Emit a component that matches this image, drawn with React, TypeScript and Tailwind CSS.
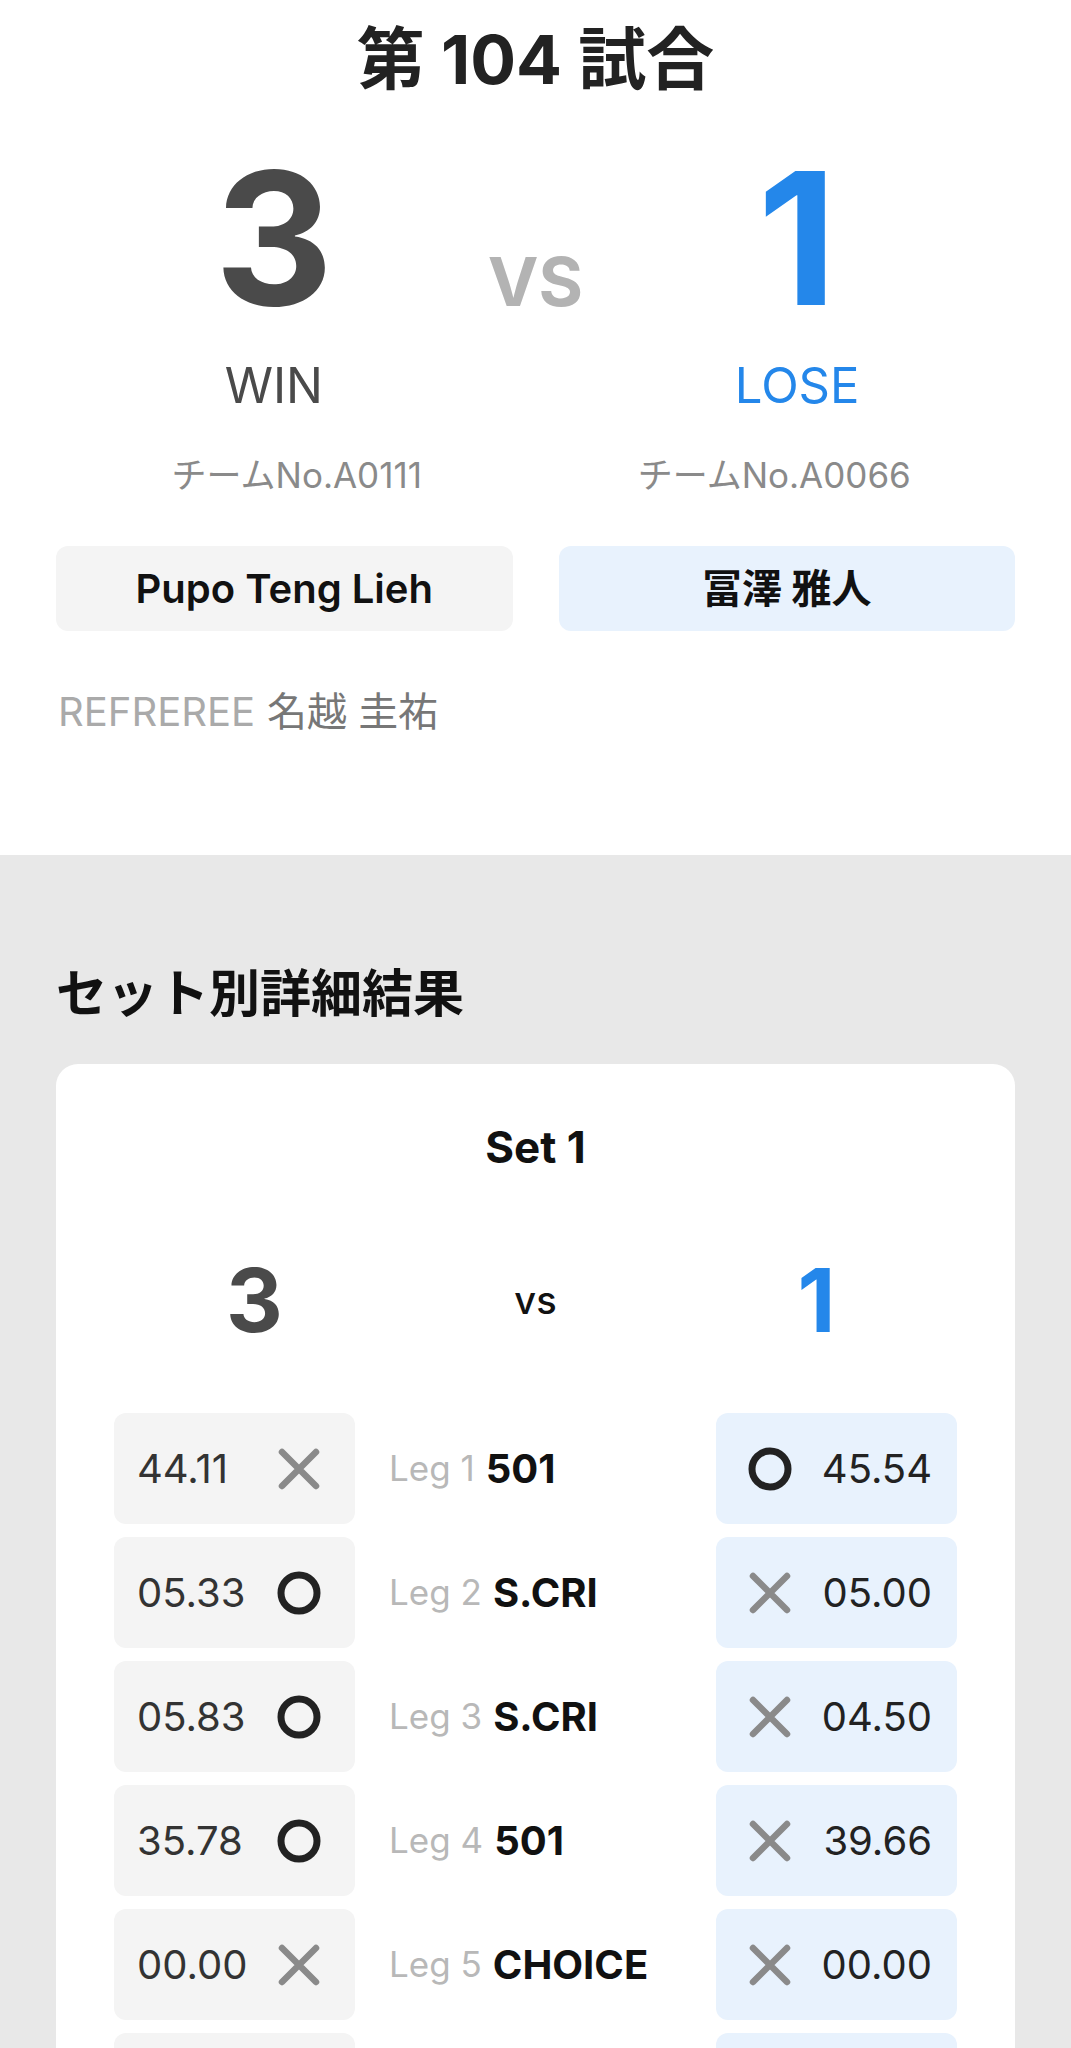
const FONT = "font-['Inter','Noto_Sans_CJK_JP',sans-serif]";

type Mark = "o" | "x";

type Leg = {
  no: number;
  game: string;
  left: { avg: string; mark: Mark };
  right: { avg: string; mark: Mark };
};

const legs: Leg[] = [
  { no: 1, game: "501", left: { avg: "44.11", mark: "x" }, right: { avg: "45.54", mark: "o" } },
  { no: 2, game: "S.CRI", left: { avg: "05.33", mark: "o" }, right: { avg: "05.00", mark: "x" } },
  { no: 3, game: "S.CRI", left: { avg: "05.83", mark: "o" }, right: { avg: "04.50", mark: "x" } },
  { no: 4, game: "501", left: { avg: "35.78", mark: "o" }, right: { avg: "39.66", mark: "x" } },
  { no: 5, game: "CHOICE", left: { avg: "00.00", mark: "x" }, right: { avg: "00.00", mark: "x" } },
  { no: 6, game: "CHOICE", left: { avg: "00.00", mark: "x" }, right: { avg: "00.00", mark: "x" } },
];

const MarkIcon = ({ mark }: { mark: Mark }) =>
  mark === "o" ? (
    <svg width="44" height="44" viewBox="0 0 44 44" aria-hidden>
      <circle cx="22" cy="22" r="18" fill="none" stroke="#222222" strokeWidth="7" />
    </svg>
  ) : (
    <svg width="44" height="44" viewBox="0 0 44 44" aria-hidden>
      <path d="M5 5 L39 39 M39 5 L5 39" stroke="#8a8a8a" strokeWidth="6.5" strokeLinecap="round" />
    </svg>
  );

const LegRow = ({ leg }: { leg: Leg }) => (
  <div className="grid grid-cols-[241px_1fr_241px] h-[111px]">
    <div className="flex items-center justify-between rounded-[12px] bg-[#f4f4f4] pl-[23px] pr-[34px]">
      <span className="text-[40px] text-[#333333]">{leg.left.avg}</span>
      <MarkIcon mark={leg.left.mark} />
    </div>
    <div className="flex items-center gap-[11px] pl-[34px]">
      <span className="text-[35px] text-[#b8b8b8]">Leg {leg.no}</span>
      <span className="text-[40px] font-bold text-[#111111]">{leg.game}</span>
    </div>
    <div className="flex items-center justify-between rounded-[12px] bg-[#e8f2fd] pl-[32px] pr-[25px]">
      <MarkIcon mark={leg.right.mark} />
      <span className="text-[40px] text-[#222222]">{leg.right.avg}</span>
    </div>
  </div>
);

export default function App() {
  return (
    <div className={`${FONT} w-full min-h-screen bg-[#e8e8e8]`}>
      {/* match header */}
      <section className="bg-white pb-[121px]">
        <div className="flex h-[118px] items-center justify-center">
          <h1 className="text-[68px] font-bold leading-none text-[#222222]">第 104 試合</h1>
        </div>

        <div className="grid grid-cols-3 px-[143px]">
          <div className="flex h-[240px] items-center justify-center text-[184px] font-bold leading-none text-[#4a4a4a]">
            3
          </div>
          <div className="flex h-[240px] items-center justify-center pt-[86px] text-[68px] font-bold leading-none text-[#b3b3b3]">
            VS
          </div>
          <div className="flex h-[240px] items-center justify-center text-[184px] font-bold leading-none text-[#2487ea]">
            1
          </div>
          <div className="flex h-[54px] items-center justify-center text-[49px] leading-none text-[#4a4a4a]">
            WIN
          </div>
          <div />
          <div className="flex h-[54px] items-center justify-center text-[49px] leading-none text-[#2487ea]">
            LOSE
          </div>
        </div>

        <div className="mt-[43px] grid grid-cols-2 px-[58px]">
          <div className="flex h-[40px] items-center justify-center text-[35px] text-[#8a8a8a]">
            チームNo.A0111
          </div>
          <div className="flex h-[40px] items-center justify-center text-[35px] text-[#8a8a8a]">
            チームNo.A0066
          </div>
        </div>

        <div className="mt-[51px] grid grid-cols-2 gap-[46px] px-[56px]">
          <div className="flex h-[85px] items-center justify-center rounded-[12px] bg-[#f4f4f4] text-[40px] font-semibold text-[#111111]">
            Pupo Teng Lieh
          </div>
          <div className="flex h-[85px] items-center justify-center rounded-[12px] bg-[#e8f2fd] text-[40px] font-bold text-[#111111]">
            冨澤 雅人
          </div>
        </div>

        <div className="mt-[59px] flex h-[44px] items-center gap-[12px] px-[58px] text-[40px]">
          <span className="text-[#aaaaaa]">REFREREE</span>
          <span className="text-[#777777]">名越 圭祐</span>
        </div>
      </section>

      {/* per-set results */}
      <section className="px-[56px] pt-[108px] pb-[60px]">
        <div className="flex h-[60px] items-center">
          <h2 className="text-[51px] font-bold leading-none text-[#111111]">セット別詳細結果</h2>
        </div>

        <div className="mt-[41px] rounded-[22px] bg-white px-[58px] pt-[58px] pb-[58px]">
          <div className="flex h-[50px] items-center justify-center text-[44px] font-bold text-[#111111]">
            Set 1
          </div>

          <div className="mt-[78px] grid h-[100px] grid-cols-3 items-center">
            <div className="text-center text-[88px] font-bold leading-none text-[#4a4a4a]">3</div>
            <div className="text-center text-[38px] font-medium leading-none text-[#111111]">vs</div>
            <div className="text-center text-[88px] font-bold leading-none text-[#2487ea]">1</div>
          </div>

          <div className="mt-[63px] flex flex-col gap-[13px]">
            {legs.map((leg) => (
              <LegRow key={leg.no} leg={leg} />
            ))}
          </div>
        </div>
      </section>
    </div>
  );
}
